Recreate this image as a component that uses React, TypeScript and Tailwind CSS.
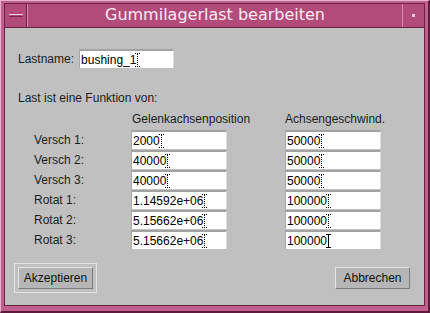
import React from 'react';

const rows = [
    { label: 'Versch 1:', a: '2000', b: '50000' },
    { label: 'Versch 2:', a: '40000', b: '50000' },
    { label: 'Versch 3:', a: '40000', b: '50000' },
    { label: 'Rotat 1:', a: '1.14592e+06', b: '100000' },
    { label: 'Rotat 2:', a: '5.15662e+06', b: '100000' },
    { label: 'Rotat 3:', a: '5.15662e+06', b: '100000', solid: true },
];

function Caret({ solid }: { solid?: boolean }) {
    // text cursor: dotted when the field is not focused
    return (
        <svg width="5" height="14" viewBox="0 0 5 14" className="shrink-0 -ml-px">
            {solid ? (
                <g stroke="#000" strokeWidth="1" fill="none">
                    <path d="M0 0.5h5M2.5 0.5v13M0 13.5h5" />
                </g>
            ) : (
                <g stroke="#000" strokeWidth="1" fill="none" strokeDasharray="1 1">
                    <path d="M0 0.5h5M2.5 1v12M0 13.5h5" />
                </g>
            )}
        </svg>
    );
}

function Field({ value, width, solid }: { value: string; width: string; solid?: boolean }) {
    return (
        <div
            className={`${width} h-[19px] bg-white border-t-2 border-l border-t-[#a2a2a2] border-l-[#a8a8a8] border-r border-r-[#dcdcdc] flex items-center pl-[1px] text-[12px] text-black`}
        >
            <span>{value}</span>
            <Caret solid={solid} />
        </div>
    );
}

function Button({ label, isDefault }: { label: string; isDefault?: boolean }) {
    return (
        <div className={`p-[3px] ${isDefault ? 'border border-[#e2e2e2]' : 'border border-transparent'}`}>
            <button className="w-[75px] h-[22px] bg-[#b6b6b6] border border-t-[#e4e4e4] border-l-[#e4e4e4] border-r-[#7c7c7c] border-b-[#7c7c7c] text-[12px] text-[#111] flex items-center justify-center">
                {label}
            </button>
        </div>
    );
}

export default function App() {
    return (
        <div className="w-[430px] h-[313px] bg-[#c0608e] border-t border-l border-[#eab0cd] border-r-2 border-b-2 border-r-[#5e1a3c] border-b-[#5e1a3c] pl-[3px] pt-[2px] pr-[3px] pb-[5px] font-['Liberation_Sans',Arial,sans-serif]">
            <div className="w-full h-full flex flex-col border border-[#6a2048]">
                {/* Title bar */}
                <div className="h-[24px] flex bg-[#b24b79] border-b border-[#6a2048]">
                    <div className="w-[22px] border-r border-[#6a2048] flex items-center justify-center">
                        <div className="w-[14px] h-[3px] border-t border-[#f0c8dc] border-b border-b-[#7a2a52]" />
                    </div>
                    <div className="flex-1 border-l border-[#d98aae] flex items-center justify-center text-[16px] text-[#fbeaf3] font-['DejaVu_Sans',sans-serif] leading-none pb-[1px]">
                        Gummilagerlast bearbeiten
                    </div>
                    <div className="w-[22px] border-l border-[#d98aae] flex items-center justify-center">
                        <div className="w-[3px] h-[3px] bg-[#f0c8dc]" />
                    </div>
                </div>

                {/* Dialog body */}
                <div className="flex-1 bg-[#c0c0c0] flex flex-col text-[12px] text-[#1c1c1c] leading-[14px]">
                    <div className="flex items-center pt-[21px] pl-[13px] gap-[5px]">
                        <span>Lastname:</span>
                        <Field value="bushing_1" width="w-[95px]" />
                    </div>

                    <div className="pl-[13px] mt-[23px]">Last ist eine Funktion von:</div>

                    <div className="grid grid-cols-[97px_96px_58px_96px] pl-[29px] mt-[7px] gap-y-px">
                        <div />
                        <div className="pl-[1px] mb-[3px]">Gelenkachsenposition</div>
                        <div />
                        <div className="mb-[3px]">Achsengeschwind.</div>
                        {rows.map((r) => (
                            <React.Fragment key={r.label}>
                                <div className="flex items-center">{r.label}</div>
                                <Field value={r.a} width="w-[96px]" />
                                <div />
                                <Field value={r.b} width="w-[96px]" solid={r.solid} />
                            </React.Fragment>
                        ))}
                    </div>

                    <div className="flex justify-between pl-[9px] pr-[10px] mt-[14px]">
                        <Button label="Akzeptieren" isDefault />
                        <Button label="Abbrechen" />
                    </div>
                </div>
            </div>
        </div>
    );
}
